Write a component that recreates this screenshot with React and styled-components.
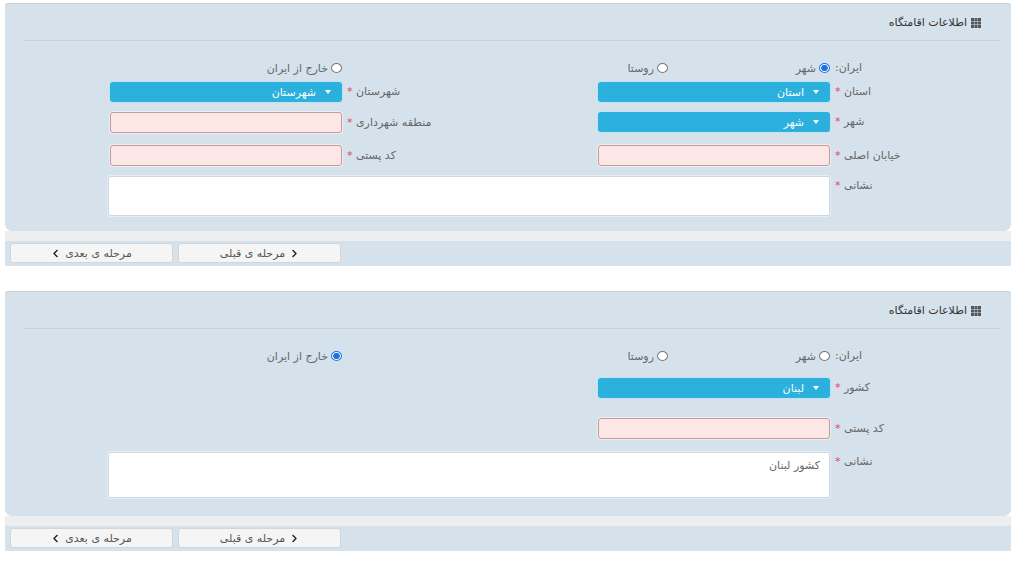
import styled, { createGlobalStyle } from 'styled-components';
import { FaChevronLeft, FaChevronRight } from 'react-icons/fa';

const GlobalStyle = createGlobalStyle`
  html, body {
    margin: 0;
    padding: 0;
    background: #fff;
  }
  body {
    font-family: "DejaVu Sans", "Noto Sans", sans-serif;
    font-size: 11px;
    color: #666;
  }
`;

const GridIcon = () => (
  <svg width="10" height="10" viewBox="0 0 10 10">
    {[0, 3.5, 7].map((y) =>
      [0, 3.5, 7].map((x) => (
        <rect key={`${x}-${y}`} x={x} y={y} width="3" height="3" fill="#555" />
      ))
    )}
  </svg>
);

const Field = ({ label, children, required = true }) => (
  <Column>
    <Label>
      {label}
      {required && <Star> *</Star>}
    </Label>
    {children}
  </Column>
);

const ResidenceForm = ({ name, outside, spacing, country }) => (
  <Section>
    <Panel>
      <Header>
        <GridIcon />
        <span>اطلاعات اقامتگاه</span>
      </Header>
      <Body $bottom={spacing.bottom}>
        <FormRow>
          <Column>
            <Label>ایران:</Label>
            <Option $width={162}>
              <Radio name={name} defaultChecked={!outside} />
              <span>شهر</span>
            </Option>
            <Option>
              <Radio name={name} />
              <span>روستا</span>
            </Option>
          </Column>
          <Column>
            <Label />
            <Option>
              <Radio name={name} defaultChecked={outside} />
              <span>خارج از ایران</span>
            </Option>
          </Column>
        </FormRow>

        {outside ? (
          <>
            <FormRow $mt={spacing.rows[0]}>
              <Field label="کشور">
                <Select>
                  <Caret />
                  <span>{country}</span>
                </Select>
              </Field>
            </FormRow>
            <FormRow $mt={spacing.rows[1]}>
              <Field label="کد پستی">
                <TextInput />
              </Field>
            </FormRow>
          </>
        ) : (
          <>
            <FormRow $mt={spacing.rows[0]}>
              <Field label="استان">
                <Select>
                  <Caret />
                  <span>استان</span>
                </Select>
              </Field>
              <Field label="شهرستان">
                <Select>
                  <Caret />
                  <span>شهرستان</span>
                </Select>
              </Field>
            </FormRow>
            <FormRow $mt={spacing.rows[1]}>
              <Field label="شهر">
                <Select>
                  <Caret />
                  <span>شهر</span>
                </Select>
              </Field>
              <Field label="منطقه شهرداری">
                <TextInput />
              </Field>
            </FormRow>
            <FormRow $mt={spacing.rows[2]}>
              <Field label="خیابان اصلی">
                <TextInput />
              </Field>
              <Field label="کد پستی">
                <TextInput />
              </Field>
            </FormRow>
          </>
        )}

        <FormRow $mt={spacing.area}>
          <Label>
            نشانی<Star> *</Star>
          </Label>
          <Address $height={spacing.areaHeight} defaultValue={outside ? 'کشور لبنان' : ''} />
        </FormRow>
      </Body>
    </Panel>
    <Strip />
    <ButtonBar>
      <NavButton>
        <FaChevronLeft size={9} />
        <span>مرحله ی بعدی</span>
      </NavButton>
      <NavButton>
        <span>مرحله ی قبلی</span>
        <FaChevronRight size={9} />
      </NavButton>
    </ButtonBar>
  </Section>
);

const App = () => (
  <>
    <GlobalStyle />
    <Page>
      <ResidenceForm
        name="res1"
        spacing={{ rows: [4, 10, 12], area: 10, areaHeight: 40, bottom: 15 }}
      />
      <ResidenceForm
        name="res2"
        outside
        country="لبنان"
        spacing={{ rows: [12, 20], area: 13, areaHeight: 46, bottom: 18 }}
      />
    </Page>
  </>
);

export default App;

const Page = styled.div`
  padding: 3px 4px 0 5px;
`;

const Section = styled.section`
  margin-bottom: 25px;
`;

const Panel = styled.div`
  background: #d5e2ec;
  border-top: 1px solid #c9d0d6;
  border-radius: 3px 3px 7px 7px;
  direction: rtl;
`;

const Header = styled.div`
  display: flex;
  align-items: center;
  gap: 4px;
  margin: 0 11px 0 19px;
  padding: 11px 19px 9px 0;
  line-height: 16px;
  border-bottom: 1px solid #c5d3de;
  color: #333;
`;

const Body = styled.div`
  padding: 17px 81px ${(p) => p.$bottom}px 0;
`;

const FormRow = styled.div`
  display: flex;
  align-items: flex-start;
  margin-top: ${(p) => p.$mt || 0}px;
`;

const Column = styled.div`
  flex: none;
  display: flex;
  align-items: center;
  width: 488px;
  min-height: 20px;
  &:last-child {
    width: auto;
  }
`;

const Label = styled.label`
  flex: none;
  width: 100px;
  box-sizing: border-box;
  padding-left: 5px;
  text-align: left;
  line-height: 20px;
  color: #666;
  white-space: nowrap;
`;

const Star = styled.span`
  color: #e2426c;
`;

const Option = styled.label`
  display: flex;
  align-items: center;
  gap: 3px;
  width: ${(p) => (p.$width ? `${p.$width}px` : 'auto')};
  color: #666;
`;

const Radio = styled.input.attrs({ type: 'radio' })`
  appearance: none;
  margin: 0;
  width: 11px;
  height: 10px;
  border-radius: 50%;
  border: 1px solid #777;
  background: #fff;
  &:checked {
    border-color: #1d74e0;
    background: radial-gradient(circle, #1d74e0 0 50%, #fff 58%);
  }
`;

const Select = styled.div`
  display: flex;
  align-items: center;
  gap: 9px;
  width: 232px;
  height: 20px;
  box-sizing: border-box;
  padding-right: 11px;
  background: #2cb0dd;
  border-radius: 3px;
  box-shadow: 0 0 0 1px #bfe4f2;
  color: #fff;
`;

const Caret = styled.span`
  width: 0;
  height: 0;
  border-left: 3px solid transparent;
  border-right: 3px solid transparent;
  border-top: 4px solid #fff;
`;

const TextInput = styled.input`
  width: 232px;
  height: 21px;
  box-sizing: border-box;
  margin: 0;
  background: #fde6e6;
  border: 1px solid #c49a9a;
  border-radius: 3px;
  box-shadow: 0 0 0 1px #e9f0f5;
`;

const Address = styled.textarea`
  width: 722px;
  height: ${(p) => p.$height}px;
  box-sizing: border-box;
  margin: 0;
  padding: 6px 9px;
  resize: none;
  background: #fff;
  border: 1px solid #c9d8e3;
  border-radius: 2px;
  box-shadow: 0 0 0 1px #e6eef4;
  font-family: inherit;
  font-size: 11px;
  color: #666;
`;

const Strip = styled.div`
  height: 10px;
  background: #eceeef;
`;

const ButtonBar = styled.div`
  display: flex;
  gap: 5px;
  padding: 2px 5px 3px;
  background: #d5e2ec;
`;

const NavButton = styled.button`
  display: flex;
  align-items: center;
  justify-content: center;
  gap: 5px;
  width: 163px;
  height: 20px;
  margin: 0;
  padding: 0;
  direction: ltr;
  background: #f5f5f5;
  border: 1px solid #d3d6d8;
  border-radius: 3px;
  font-family: inherit;
  font-size: 11px;
  color: #555;
  svg {
    color: #222;
  }
`;
